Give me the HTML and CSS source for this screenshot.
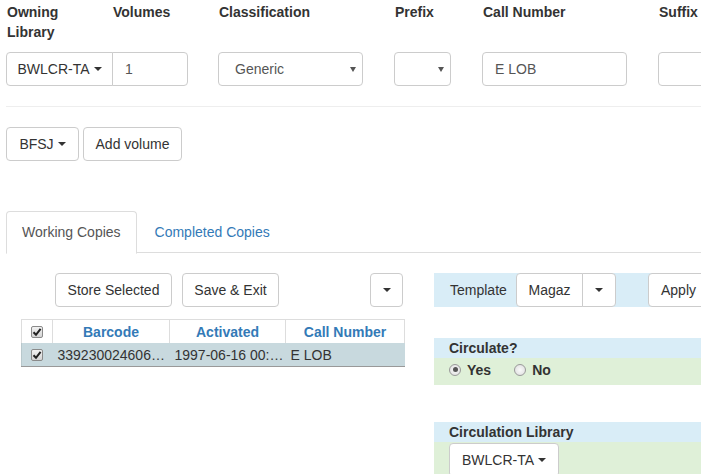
FILE: index.html
```html
<!DOCTYPE html>
<html>
<head>
<meta charset="utf-8">
<link rel="stylesheet" href="styles.css">
</head>
<body>
<div class="page">
  <div class="fields">
    <div class="lbl lbl-narrow">Owning Library</div>
    <div class="lbl">Volumes</div>
    <div class="lbl">Classification</div>
    <div class="lbl">Prefix</div>
    <div class="lbl">Call Number</div>
    <div class="lbl">Suffix</div>

    <div class="input-group span2">
      <div class="btn btn-left w-owning">BWLCR-TA <span class="caret"></span></div>
      <div class="input input-right input-vol">1</div>
    </div>
    <div class="select select-class">Generic<span class="sel-arrow"></span></div>
    <div class="select select-prefix"><span class="sel-arrow"></span></div>
    <div class="input input-call">E LOB</div>
    <div class="input input-suffix"></div>
  </div>

  <div class="rule"></div>

  <div class="vol-actions">
    <div class="btn w-bfsj">BFSJ <span class="caret"></span></div>
    <div class="btn w-addvol">Add volume</div>
  </div>

  <div class="tabs">
    <div class="tab tab-active">Working Copies</div>
    <div class="tab">Completed Copies</div>
  </div>

  <div class="tab-body">
    <div class="left-col">
      <div class="toolbar">
        <div class="btn w-store">Store Selected</div>
        <div class="btn w-save">Save &amp; Exit</div>
        <div class="btn btn-caret"><span class="caret"></span></div>
      </div>
      <table class="grid">
        <colgroup>
          <col class="c-check"><col class="c-bar"><col class="c-act"><col class="c-call">
        </colgroup>
        <thead>
          <tr>
            <th><span class="cbox"><svg viewBox="0 0 12 12" width="12" height="12"><path d="M2.5 6.2 L5 8.8 L9.6 2.8" fill="none" stroke="#222" stroke-width="2"/></svg></span></th>
            <th>Barcode</th>
            <th>Activated</th>
            <th>Call Number</th>
          </tr>
        </thead>
        <tbody>
          <tr class="sel">
            <td><span class="cbox"><svg viewBox="0 0 12 12" width="12" height="12"><path d="M2.5 6.2 L5 8.8 L9.6 2.8" fill="none" stroke="#222" stroke-width="2"/></svg></span></td>
            <td class="ell">339230024606789</td>
            <td class="ell">1997-06-16 00:00:00</td>
            <td class="ell">E LOB</td>
          </tr>
        </tbody>
      </table>
    </div>

    <div class="right-col">
      <div class="template-bar">
        <span class="tpl-label">Template</span>
        <div class="split">
          <div class="btn btn-left w-magaz">Magaz</div>
          <div class="btn btn-right btn-caret"><span class="caret"></span></div>
        </div>
        <div class="btn btn-apply">Apply</div>
      </div>

      <div class="attr attr-circ">
        <div class="attr-head">Circulate?</div>
        <div class="attr-body radios">
          <span class="radio checked"></span><span class="rlabel">Yes</span>
          <span class="radio radio-no"></span><span class="rlabel">No</span>
        </div>
      </div>

      <div class="attr attr-lib">
        <div class="attr-head">Circulation Library</div>
        <div class="attr-body lib-body">
          <div class="btn w-circlib">BWLCR-TA <span class="caret"></span></div>
        </div>
      </div>
    </div>
  </div>
</div>
</body>
</html>
```

FILE: styles.css
```css
html, body {
  margin: 0;
  padding: 0;
  overflow: hidden;
  background: #fff;
}
body {
  font-family: "Liberation Sans", Arial, sans-serif;
  font-size: 14px;
  line-height: 20px;
  color: #333;
  width: 701px;
  height: 474px;
}
.page {
  padding: 2px 0 0 6px;
  width: 1200px;
}

/* top field grid */
.fields {
  display: grid;
  grid-template-columns: 106px 106px 176px 88px 176px 176px;
  row-gap: 10px;
  align-items: start;
}
.lbl {
  font-weight: bold;
  padding-left: 1px;
}
.lbl-narrow { max-width: 80px; }
.span2 { grid-column: 1 / 3; }
.input-group { display: flex; }

.btn {
  display: inline-flex;
  align-items: center;
  justify-content: center;
  box-sizing: border-box;
  height: 34px;
  padding: 6px 12px;
  border: 1px solid #ccc;
  border-radius: 4px;
  background: #fff;
  color: #333;
  white-space: nowrap;
  flex: none;
}
.caret {
  display: inline-block;
  width: 0;
  height: 0;
  margin-left: 4px;
  border-top: 4px solid #333;
  border-left: 4px solid transparent;
  border-right: 4px solid transparent;
}
.w-owning { width: 107px; padding: 6px 8px; }
.w-bfsj { width: 73px; padding: 6px 8px; }
.w-addvol { width: 99px; padding: 6px 8px; }
.w-store { width: 117px; padding: 6px 8px; }
.w-save { width: 97px; padding: 6px 8px; }
.w-magaz { width: 67px; padding: 6px 8px; }
.w-circlib { width: 110px; padding: 6px 8px; }

.btn-left { border-top-right-radius: 0; border-bottom-right-radius: 0; }
.btn-right { border-top-left-radius: 0; border-bottom-left-radius: 0; margin-left: -1px; }
.btn-caret { padding: 6px 12px; width: 34px; }
.btn-caret .caret { margin-left: 0; }

.input {
  box-sizing: border-box;
  height: 34px;
  padding: 6px 12px;
  border: 1px solid #ccc;
  border-radius: 4px;
  color: #555;
  background: #fff;
}
.input-right { border-top-left-radius: 0; border-bottom-left-radius: 0; margin-left: -1px; }
.input-vol { width: 76px; }
.input-call { width: 145px; }
.input-suffix { width: 145px; }

.select {
  position: relative;
  box-sizing: border-box;
  height: 34px;
  padding: 6px 16px;
  border: 1px solid #ccc;
  border-radius: 4px;
  color: #555;
  background: #fff;
}
.select-class { width: 145px; }
.select-prefix { width: 57px; }
.sel-arrow {
  position: absolute;
  right: 6px;
  top: 14px;
  width: 0;
  height: 0;
  border-top: 5px solid #555;
  border-left: 3.5px solid transparent;
  border-right: 3.5px solid transparent;
}

.rule {
  margin-top: 20px;
  border-top: 1px solid #eee;
}

.vol-actions {
  display: flex;
  gap: 4px;
  margin-top: 20px;
}

/* tabs */
.tabs {
  display: flex;
  margin-top: 50px;
  border-bottom: 1px solid #ddd;
  height: 41px;
}
.tab {
  padding: 10px 15px;
  border: 1px solid transparent;
  border-radius: 4px 4px 0 0;
  margin-right: 2px;
  color: #337ab7;
  height: 20px;
}
.tab-active {
  color: #555;
  border-color: #ddd #ddd transparent;
  background: #fff;
  height: 21px;
}

.tab-body {
  display: flex;
  margin-top: 20px;
}
.left-col {
  margin-left: 15px;
  width: 383px;
  flex: none;
}
.toolbar {
  display: flex;
  gap: 10px;
  padding-left: 34px;
  width: 382px;
  box-sizing: border-box;
}
.toolbar .btn-caret { margin-left: auto; width: 33px; }

.grid {
  margin-top: 12px;
  width: 383px;
  table-layout: fixed;
  border-collapse: collapse;
}
.c-check { width: 31px; }
.c-bar { width: 117px; }
.c-act { width: 116px; }
.c-call { width: 119px; }
.grid th {
  border: 1px solid #ddd;
  border-bottom: none;
  color: #337ab7;
  font-weight: bold;
  text-align: center;
  padding: 1px 2px;
  height: 21px;
}
.grid td {
  padding: 1px 1px 1px 5px;
  height: 21px;
  white-space: nowrap;
}
.grid tr.sel td {
  background: #c8d9de;
  border-bottom: 1px solid #999;
}
.grid tr.sel td:first-child { border-left: 1px solid #b8c8cc; }
.ell {
  overflow: hidden;
  text-overflow: ellipsis;
}
.grid th:first-child, .grid td:first-child {
  text-align: center;
  padding: 0;
}
.cbox {
  display: inline-block;
  box-sizing: border-box;
  width: 12px;
  height: 12px;
  border: 1px solid #8a8a8a;
  border-radius: 2px;
  background: linear-gradient(#f2f2f2, #d4d4d4);
  vertical-align: -1px;
  position: relative;
}
.cbox svg {
  position: absolute;
  left: -1px;
  top: -1px;
}

/* right column */
.right-col {
  margin-left: 30px;
  flex: 1;
}
.template-bar {
  display: flex;
  align-items: flex-start;
  background: #d9edf7;
  height: 34px;
}
.tpl-label {
  padding: 7px 0 0 16px;
  width: 66px;
}
.split { display: flex; }
.btn-apply { margin-left: 32px; }

.attr-head {
  background: #d9edf7;
  font-weight: bold;
  padding-left: 15px;
  height: 20px;
}
.attr-body {
  background: #dff0d8;
  padding-left: 15px;
}
.attr-circ { margin-top: 31px; }
.radios {
  display: flex;
  align-items: center;
  height: 27px;
  box-sizing: border-box;
}
.radio {
  display: inline-block;
  box-sizing: border-box;
  width: 12px;
  height: 12px;
  border: 1px solid #9a9a9a;
  border-radius: 50%;
  background: radial-gradient(circle, #fafafa 0, #dcdcdc 100%);
  position: relative;
  margin-top: -4px;
}
.radio.checked::after {
  content: "";
  position: absolute;
  left: 2.5px;
  top: 2.5px;
  width: 5px;
  height: 5px;
  border-radius: 50%;
  background: #555;
}
.rlabel {
  font-weight: bold;
  margin-left: 6px;
  margin-top: -4px;
}
.rlabel + .radio-no { margin-left: 23px; }

.attr-lib { margin-top: 37px; }
.lib-body {
  padding-top: 1px;
  height: 40px;
}
```
